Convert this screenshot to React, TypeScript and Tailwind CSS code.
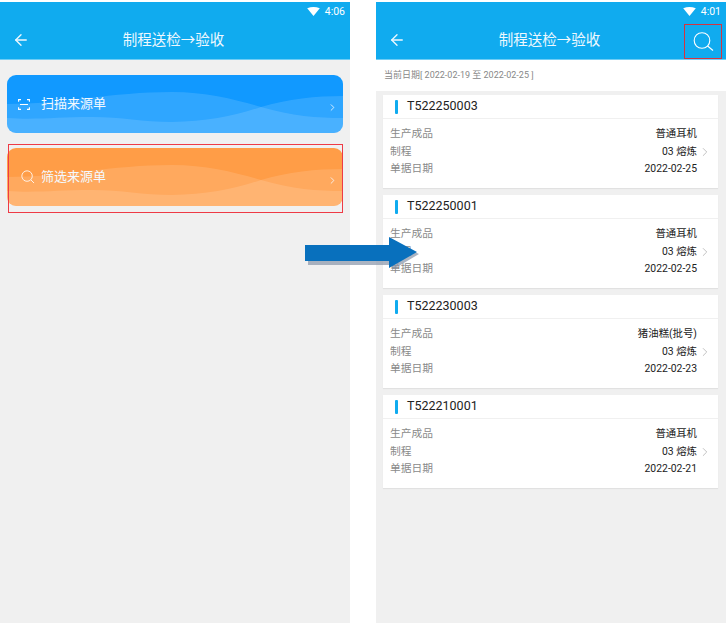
import { FC } from 'react';
import { ArrowLeft, ChevronRight } from 'lucide-react';

const font = 'font-["Roboto","Noto_Sans_CJK_SC",sans-serif]';

const StatusBar: FC<{ time: string }> = ({ time }) => (
  <div className="flex h-[20px] items-center justify-end pr-[5px] text-[10.5px] text-white">
    <svg width="13" height="9" viewBox="0 0 14 10" className="mr-[5px] mb-[1px]">
      <path d="M0 1.5 Q7 -1.5 14 1.5 L7 10 Z" fill="#fff" />
    </svg>
    <span>{time}</span>
  </div>
);

const Header: FC<{ time: string; search?: boolean }> = ({ time, search }) => (
  <div className="relative h-[58px] border-b border-[#6fcdf5] bg-[#10abef]">
    <StatusBar time={time} />
    <div className="relative flex h-[38px] items-center justify-center pr-[3px] text-[14.5px] text-[#eef8fe]">
      <ArrowLeft className="absolute left-[12px] top-[9px] h-[18px] w-[18px]" strokeWidth={1.8} />
      <span>制程送检→验收</span>
      {search && (
        <div className="absolute right-[4px] top-[2px] flex h-[35px] w-[38px] items-center justify-center border-[1.5px] border-[#d6333f]">
          <svg width="24" height="24" viewBox="0 0 24 24" fill="none" stroke="#fff" strokeWidth="1.1">
            <circle cx="11" cy="10.5" r="7.8" />
            <path d="M16.6 16 L22 20.5" />
          </svg>
        </div>
      )}
    </div>
  </div>
);

// 两层半透明波浪，在 x=254 处交叉
const Waves: FC = () => (
  <svg className="absolute inset-0 h-full w-full" viewBox="0 0 336 58" preserveAspectRatio="none">
    <path d="M0 29 C55 29 105 17 165 17 C200 17 230 25 254 32 C285 41 310 43 336 43 L336 58 L0 58 Z" fill="#fff" fillOpacity="0.13" />
    <path d="M0 43 C30 45 50 42 85 42 C115 42 135 47 165 47 C200 47 230 40 254 32 C280 24 310 21 336 21 L336 58 L0 58 Z" fill="#fff" fillOpacity="0.13" />
  </svg>
);

const ActionCard: FC<{ label: string; kind: 'scan' | 'filter' }> = ({ label, kind }) => (
  <div
    className={`relative flex h-[58px] items-center overflow-hidden rounded-[9px] text-[13px] text-[#f4f9ff] ${
      kind === 'scan' ? 'bg-[#1199ff]' : 'bg-[#ff9d47]'
    }`}
  >
    <Waves />
    <div className="relative flex w-full items-center pl-[11px] pr-[5px]">
      <div className="flex w-[23px] justify-start">
        {kind === 'scan' ? (
          <svg width="12" height="11" viewBox="0 0 12 11" fill="none" stroke="#fff" strokeWidth="1.1">
            <path d="M0.6 2.8 V0.6 H3 M9 0.6 H11.4 V2.8 M0.6 8.2 V10.4 H3 M9 10.4 H11.4 V8.2 M2 5.5 H10" />
          </svg>
        ) : (
          <svg width="14" height="14" viewBox="0 0 15 15" fill="none" stroke="#fff" strokeWidth="1" className="ml-[3px]" opacity="0.9">
            <circle cx="6.5" cy="6.5" r="5.6" />
            <path d="M10.6 10.6 L14 14" />
          </svg>
        )}
      </div>
      <span>{label}</span>
      <ChevronRight className="ml-auto mt-[6px] h-[11px] w-[11px]" strokeWidth={1.8} />
    </div>
  </div>
);

type Order = { no: string; product: string; date: string };

const orders: Order[] = [
  { no: 'T522250003', product: '普通耳机', date: '2022-02-25' },
  { no: 'T522250001', product: '普通耳机', date: '2022-02-25' },
  { no: 'T522230003', product: '猪油糕(批号)', date: '2022-02-23' },
  { no: 'T522210001', product: '普通耳机', date: '2022-02-21' },
];

const Row: FC<{ label: string; value: string }> = ({ label, value }) => (
  <div className="flex items-center justify-between">
    <span className="text-[10.75px] text-[#8a8a8a]">{label}</span>
    <span className="text-[10.4px] text-[#222]">{value}</span>
  </div>
);

const OrderCard: FC<{ order: Order }> = ({ order }) => (
  <div className="h-[93px] bg-white shadow-[0_1px_1px_rgba(0,0,0,0.06)]">
    <div className="flex h-[24px] items-center border-b border-[#f0f0f0] pl-[12px] text-[12.5px] text-[#222]">
      <div className="mr-[9px] h-[14px] w-[3px] rounded-[1px] bg-[#10abef]" />
      <span>{order.no}</span>
    </div>
    <div className="relative flex flex-col pt-[6px] pl-[7px] pr-[21px] leading-[17.5px]">
      <Row label="生产成品" value={order.product} />
      <Row label="制程" value="03 熔炼" />
      <Row label="单据日期" value={order.date} />
      <ChevronRight className="absolute right-[6px] top-[26px] h-[14px] w-[14px] text-[#a8a8a8]" strokeWidth={1.2} />
    </div>
  </div>
);

export default function App() {
  return (
    <div className={`relative flex h-[628px] w-[726px] overflow-hidden bg-white pt-[2px] ${font}`}>
      <div className="flex h-[621px] w-[350px] flex-col bg-[#f0f0f0]">
        <Header time="4:06" />
        <div className="flex flex-col gap-[15px] pl-[7px] pr-[7px] pt-[15px]">
          <ActionCard label="扫描来源单" kind="scan" />
          <div className="relative">
            <ActionCard label="筛选来源单" kind="filter" />
            <div className="absolute left-[1px] right-0 top-[-4px] h-[69px] border border-[#ee3b46]" />
          </div>
        </div>
      </div>
      <div className="ml-[26px] flex h-[621px] w-[350px] flex-col bg-[#f0f0f0]">
        <Header time="4:01" search />
        <div className="flex h-[31px] items-center bg-white pl-[8px] text-[9px] text-[#888]">
          当前日期[ 2022-02-19 至 2022-02-25 ]
        </div>
        <div className="flex flex-col gap-[7px] pl-[7px] pr-[8px] pt-[4px]">
          {orders.map((o) => (
            <OrderCard key={o.no} order={o} />
          ))}
        </div>
      </div>
      {/* 两屏之间的箭头 */}
      <svg className="absolute left-[305px] top-[237px]" width="115" height="36" viewBox="0 0 115 36">
        <path d="M3 12 H87 V4 L114 17 L87 33 V28 H3 Z" fill="#8894a8" fillOpacity="0.7" />
        <path d="M0 8 H84 V0 L112 15 L84 31 V24 H0 Z" fill="#0870bd" />
      </svg>
    </div>
  );
}
